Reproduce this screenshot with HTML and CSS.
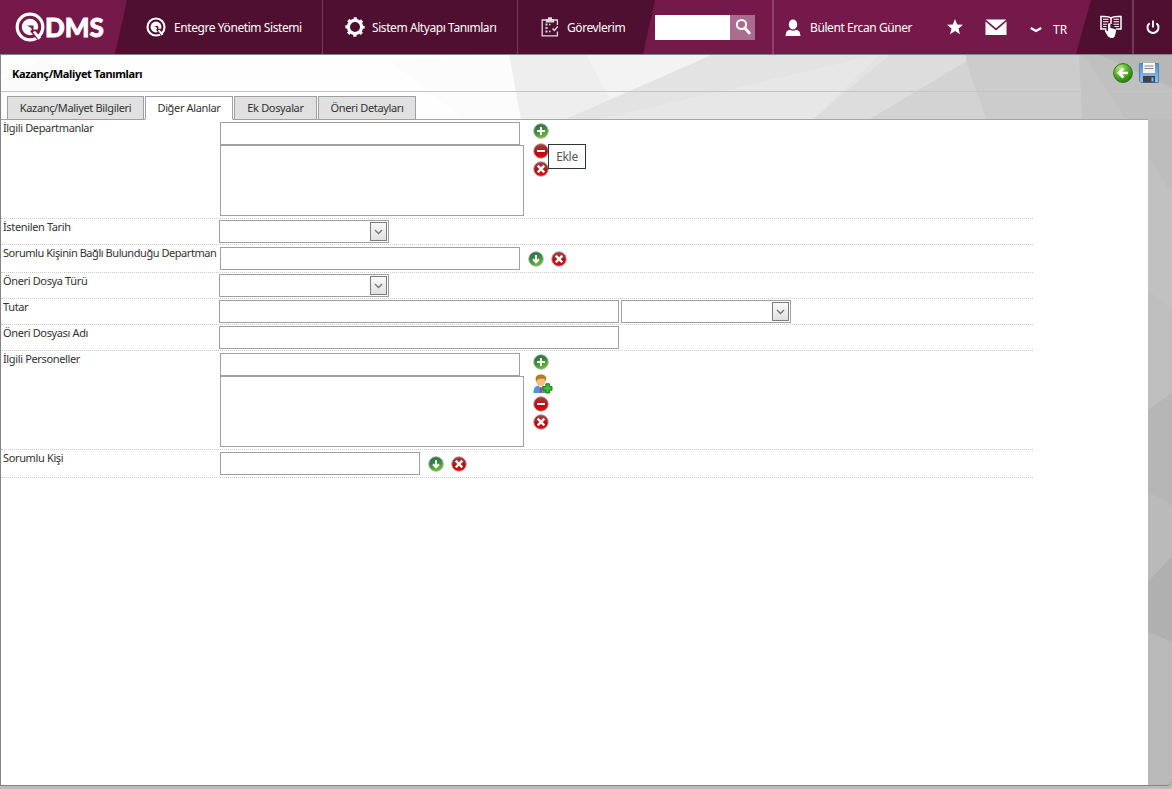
FILE: index.html
```html
<!DOCTYPE html>
<html lang="tr">
  <head>
    <meta charset="UTF-8" />
    <meta name="viewport" content="width=device-width, initial-scale=1.0" />
    <title>QDMS - Kazanç/Maliyet Tanımları</title>
    <link rel="stylesheet" href="styles.css">
  </head>
  <body>
    <!-- shared icons -->
    <svg class="defs" width="0" height="0">
      <defs>
        <linearGradient id="green" x1="0" y1="0" x2="0.4" y2="1">
          <stop offset="0" stop-color="#276b47" />
          <stop offset="0.5" stop-color="#398544" />
          <stop offset="1" stop-color="#6cb830" />
        </linearGradient>
        <linearGradient id="red" x1="0" y1="0" x2="0" y2="1">
          <stop offset="0" stop-color="#a93c42" />
          <stop offset="0.48" stop-color="#b01c22" />
          <stop offset="0.55" stop-color="#c00508" />
          <stop offset="1" stop-color="#e01010" />
        </linearGradient>
        <radialGradient id="lime" cx="0.35" cy="0.25" r="0.8">
          <stop offset="0" stop-color="#b6e67c" />
          <stop offset="0.55" stop-color="#4fac24" />
          <stop offset="1" stop-color="#1f7a0c" />
        </radialGradient>
        <linearGradient id="blue" x1="0" y1="0" x2="0" y2="1">
          <stop offset="0" stop-color="#5b8fc9" />
          <stop offset="1" stop-color="#8cc4f2" />
        </linearGradient>
      </defs>
      <symbol id="i-add" viewBox="0 0 16 16">
        <circle cx="8" cy="8" r="7.3" fill="url(#green)" stroke="#a9b5ac" stroke-width="0.9" />
        <path d="M8 4v8M4 8h8" stroke="#fff" stroke-width="2" />
      </symbol>
      <symbol id="i-remove" viewBox="0 0 16 16">
        <circle cx="8" cy="8" r="7.3" fill="url(#red)" stroke="#b5a6a8" stroke-width="0.9" />
        <path d="M4 8h8" stroke="#fff" stroke-width="2" />
      </symbol>
      <symbol id="i-clear" viewBox="0 0 16 16">
        <circle cx="8" cy="8" r="7.3" fill="url(#red)" stroke="#b5a6a8" stroke-width="0.9" />
        <path d="M4.7 4.7l6.6 6.6M11.3 4.7l-6.6 6.6" stroke="#fff" stroke-width="2.4" />
      </symbol>
      <symbol id="i-pick" viewBox="0 0 16 16">
        <circle cx="8" cy="8" r="7.3" fill="url(#green)" stroke="#a9b5ac" stroke-width="0.9" />
        <path d="M8 4v7M5 8.3l3 3 3-3" fill="none" stroke="#fff" stroke-width="2" />
      </symbol>
      <!-- ring, inner disc, cut-out and tail -->
      <symbol id="i-q" viewBox="0 0 30 30">
        <circle cx="15" cy="15" r="12.8" fill="none" stroke="#fff" stroke-width="3.2" />
        <circle cx="15" cy="15" r="8.2" fill="#fff" />
        <path d="M12 13.5h6.500v4.200l6 7.800-2.500 2-7-8.500c2-.4 2.400-2.500.5-3.500z" fill="currentColor" />
        <path d="M18.500 17.500h5l-2.800 4.500z" fill="currentColor" />
        <path d="M17.800 20.200l2.300-1.200 6 6.500-2.600 2.300z" fill="#fff" />
      </symbol>
    </svg>

    <header class="topbar">
      <a class="logo" href="#">
        <svg width="30" height="30"><use href="#i-q" /></svg>
        <span>DMS</span>
      </a>
      <nav class="menu">
        <a class="menu-item m1" href="#">
          <svg class="q" width="20" height="20"><use href="#i-q" /></svg>
          <span>Entegre Yönetim Sistemi</span>
        </a>
        <a class="menu-item m2" href="#">
          <svg width="20" height="20" viewBox="0 0 20 20">
            <circle cx="10" cy="10" r="6.6" fill="none" stroke="#fff" stroke-width="3.2" />
            <circle cx="10" cy="10" r="8.7" fill="none" stroke="#fff" stroke-width="2" stroke-dasharray="3.3 3.53" stroke-dashoffset="1.6" />
          </svg>
          <span>Sistem Altyapı Tanımları</span>
        </a>
        <a class="menu-item m3" href="#">
          <svg width="18" height="20" viewBox="0 0 18 20" fill="none" stroke="#e5dbe0" stroke-width="1.3">
            <path d="M5 3H1.2v15.8h15.2V14.500M16.400 8V3h-3.700" />
            <path d="M5.500 4.800V2.600H7.700V1h2.600v1.600h2.200v2.200z" fill="#e5dbe0" />
            <path d="M4.500 7.500h2M4.500 11h2M4.500 14.500h2" stroke-width="2" />
            <path d="M8 7.500h1.500M8 14.500h1.500M11.500 11.500l1.800 2 3.500-4" />
          </svg>
          <span>Görevlerim</span>
        </a>
      </nav>
      <form class="search">
        <input type="text" />
        <button type="button">
          <svg width="16" height="18" viewBox="0 0 16 18" fill="none" stroke="#fff">
            <circle cx="6.500" cy="6.500" r="4.600" stroke-width="2" />
            <path d="M9.800 10l4.400 5" stroke-width="2.800" stroke-linecap="round" />
          </svg>
        </button>
      </form>
      <div class="user">
        <svg width="16" height="18" viewBox="0 0 16 18" fill="#fff">
          <ellipse cx="8" cy="5.500" rx="4.200" ry="5" />
          <path d="M.4 17l1-4c.4-1.300 2.500-1.900 3.900-2.200 1.600 1.300 3.800 1.300 5.400 0 1.400.3 3.500.9 3.900 2.200l1 4z" />
        </svg>
        <span>Bülent Ercan Güner</span>
      </div>
      <div class="tools">
        <svg width="16" height="16" viewBox="0 0 16 16" fill="#fff">
          <path d="M8 0l2.200 5.400 5.800.4-4.500 3.700 1.500 5.700-5-3.100-5 3.100 1.500-5.700L0 5.800l5.800-.4z" />
        </svg>
        <svg class="mail" width="22" height="17" viewBox="0 0 22 17" fill="#fff">
          <path d="M.7.500h20.600L11 9.300z" />
          <path d="M.5 2.500L11 11.500l10.500-9V16H.5z" />
        </svg>
        <svg class="caret" width="12" height="6" viewBox="0 0 12 6">
          <path d="M.8 1l5.200 2.900L11.200 1" fill="none" stroke="#fff" stroke-width="2.200" />
        </svg>
        <span class="lang">TR</span>
      </div>
      <div class="corner">
        <a class="manual" href="#">
          <svg width="22" height="24" viewBox="0 0 22 24">
            <path d="M11 3C8.500 1 5 1.200 1 1.500V14h5.500M11 3c2.500-2 6-1.800 10-1.500V14h-5M11 3v6" fill="none" stroke="#fff" stroke-width="1.500" />
            <path d="M3 4.300h5.500M3 6.800h5.500M3 9.300h4M3 11.500h3.500M13.500 4.300H19M13.500 6.800H19M13.500 9.300H19M14.500 11.500H19" stroke="#fff" stroke-width="1.100" />
            <path d="M8 9.500c0-1.600 2.400-1.600 2.400 0V13l4.500.9c1.300.3 1.300 1.500 1 3l-1 3.500c-.5 1.800-1.500 2.600-3.200 2.600-2.500 0-3.300-.9-4.300-2.500L5 16.500c-.6-1.200.6-1.800 1.500-1.200L8 16.500z" fill="#fff" />
          </svg>
        </a>
        <a class="power" href="#">
          <svg width="14" height="15" viewBox="0 0 14 15" fill="none" stroke="#fff" stroke-width="1.900">
            <path d="M3.600 3.200a5.500 5.500 0 1 0 6.800 0M7 .5v7" />
          </svg>
        </a>
      </div>
    </header>

    <main class="page">
      <svg class="backdrop" width="1172" height="735" viewBox="0 54 1172 735">
        <path d="M0 54h1172v735H0z" fill="#fefefe" />
        <path d="M53 54L30 119H0V80z" fill="#fbfbfb" />
        <path d="M388 60L464 119h57L509 54z" fill="#fcfcfc" />
        <path d="M509 54L521 120h651V54z" fill="#eeeeee" />
        <path d="M586 54L610 100 714 54z" fill="#f3f3f3" />
        <path d="M566 119L714 54h250v65z" fill="#e3e3e3" />
        <path d="M600 119L880 54l-66 65z" fill="#e7e7e7" />
        <path d="M813 119L891 54h89v65z" fill="#dddddd" />
        <path d="M870 119l97-58 30 58z" fill="#d3d3d3" />
        <path d="M966 54v7l20 58h186V54z" fill="#cccccc" />
        <path d="M1079 54l3 65h90V54z" fill="#c4c4c4" />
        <path d="M1084 54l42 66h46V54z" fill="#c0c0c0" />
        <path d="M1098 54l74 34V54z" fill="#b7b7b7" />
        <path d="M1126 119h46v670h-46z" fill="#bdbdbd" />
        <path d="M1148 156l24 38v199l-24 17z" fill="#c1c1c1" />
        <path d="M1148 290l24 20v83l-24 17z" fill="#bebebe" />
        <path d="M1148 410l24-17v112l-24-13z" fill="#b6b6b6" />
        <path d="M1148 492l24 13v51l-24 26z" fill="#bababa" />
        <path d="M1148 582l24-26v86l-24-10z" fill="#b0b0b0" />
        <path d="M1148 632l24 10v147h-24z" fill="#b9b9b9" />
        <path d="M0 786h1172v3H0z" fill="#bcbcbc" />
      </svg>

      <section class="panel">
        <div class="title-bar">
          <h1>Kazanç/Maliyet Tanımları</h1>
          <div class="actions">
            <svg width="20" height="20" viewBox="0 0 20 20">
              <circle cx="10" cy="10" r="9.400" fill="url(#lime)" stroke="#2d7418" stroke-width="1" />
              <path d="M15 10H6.500M10.400 5.500L5.800 10l4.600 4.500" fill="none" stroke="#fff" stroke-width="2.600" />
            </svg>
            <svg width="20" height="20" viewBox="0 0 20 20">
              <path d="M.5.500h19v19H2l-1.500-1.500z" fill="url(#blue)" stroke="#5282b8" />
              <path d="M4 0h12v10H4z" fill="#f4f4f4" />
              <path d="M5.500 3h9M5.500 5.500h9" stroke="#8a8a8a" stroke-width="1.200" />
              <path d="M4 13h12v6.500H4z" fill="#3c424a" />
              <path d="M12.500 14.500h2v4h-2z" fill="#84baf0" />
            </svg>
          </div>
        </div>

        <div class="tabs">
          <a class="tab tab1" href="#">Kazanç/Maliyet Bilgileri</a>
          <a class="tab tab2 active" href="#">Diğer Alanlar</a>
          <a class="tab tab3" href="#">Ek Dosyalar</a>
          <a class="tab tab4" href="#">Öneri Detayları</a>
        </div>

        <div class="content">
          <div class="row tall">
            <label>İlgili Departmanlar</label>
            <div class="stack">
              <input class="medium" type="text" />
              <div class="listbox"></div>
            </div>
            <div class="side">
              <svg><use href="#i-add" /></svg>
              <svg class="spaced"><use href="#i-remove" /></svg>
              <svg><use href="#i-clear" /></svg>
              <div class="tooltip">Ekle</div>
            </div>
          </div>
          <div class="row">
            <label>İstenilen Tarih</label>
            <div class="combo"><i><svg width="9" height="6" viewBox="0 0 9 6"><path d="M1 1l3.500 3.500L8 1" /></svg></i></div>
          </div>
          <div class="row pick">
            <label class="long">Sorumlu Kişinin Bağlı Bulunduğu Departman</label>
            <input class="medium" type="text" />
            <div class="inline">
              <svg><use href="#i-pick" /></svg>
              <svg><use href="#i-clear" /></svg>
            </div>
          </div>
          <div class="row">
            <label>Öneri Dosya Türü</label>
            <div class="combo"><i><svg width="9" height="6" viewBox="0 0 9 6"><path d="M1 1l3.500 3.500L8 1" /></svg></i></div>
          </div>
          <div class="row">
            <label>Tutar</label>
            <input class="wide" type="text" />
            <div class="combo"><i><svg width="9" height="6" viewBox="0 0 9 6"><path d="M1 1l3.500 3.500L8 1" /></svg></i></div>
          </div>
          <div class="row">
            <label>Öneri Dosyası Adı</label>
            <input class="wide" type="text" />
          </div>
          <div class="row tall">
            <label>İlgili Personeller</label>
            <div class="stack">
              <input class="medium" type="text" />
              <div class="listbox"></div>
            </div>
            <div class="side">
              <svg><use href="#i-add" /></svg>
              <svg class="person" viewBox="0 0 20 20">
                <path d="M.5 19c-.3-4 1-6.500 4.500-7.500h5c3.500 1 4.500 3.500 4.200 7.500z" fill="#4a94e0" />
                <path d="M5.500 11.500l2.300 3 2-3z" fill="#fff" />
                <path d="M7.200 13h1.200l.6 4.500-1.200 1.500-1.200-1.500z" fill="#d33a3a" />
                <ellipse cx="7.800" cy="6.800" rx="4.600" ry="5" fill="#f3bf80" />
                <path d="M3.100 8C1.500 2.500 4 .5 8 .5s6.300 2.300 4.700 7c-.4-2.400-1.700-3.200-4.200-3-2.700.1-4.300.6-5.400 3.500z" fill="#b87a1d" />
                <path d="M12.800 9.800h3.600v2.800H19v3.600h-2.600V19h-3.600v-2.800H10v-3.600h2.800z" fill="#3fc02b" stroke="#187b16" />
              </svg>
              <svg class="spaced"><use href="#i-remove" /></svg>
              <svg><use href="#i-clear" /></svg>
            </div>
          </div>
          <div class="row pick">
            <label>Sorumlu Kişi</label>
            <input class="narrow" type="text" />
            <div class="inline">
              <svg><use href="#i-pick" /></svg>
              <svg><use href="#i-clear" /></svg>
            </div>
          </div>
        </div>
      </section>
    </main>
  </body>
</html>
```
FILE: styles.css
```css
* {
  box-sizing: border-box;
}
html,
body {
  margin: 0;
  height: 100%;
  overflow: hidden;
}
body {
  width: 1172px;
  font-family: "Noto Sans", "Open Sans", sans-serif;
  font-size: 11px;
  color: #333;
}
a {
  color: inherit;
  text-decoration: none;
}
svg {
  display: block;
  flex: none;
}
.defs {
  position: absolute;
}

/* top bar */
.topbar {
  display: flex;
  height: 54px;
  background: #75194a;
  color: #fff;
  font-size: 12px;
  letter-spacing: -0.42px;
  white-space: nowrap;
}
.logo {
  display: flex;
  align-items: center;
  width: 115px;
  padding-left: 15px;
  font-family: Lato, sans-serif;
  font-size: 26px;
  font-weight: 900;
}
.logo svg {
  color: #75194a;
}
.logo span {
  letter-spacing: 0;
  -webkit-text-stroke: 0.8px #fff;
}
.menu {
  display: flex;
  width: 540px;
  background: #4f0f31;
  clip-path: polygon(12px 0, 100% 0, 528px 100%, 0 100%);
}
.menu-item {
  display: flex;
  align-items: center;
  border-right: 1px solid #6f3c57;
}
.menu-item span {
  padding-top: 1px;
}
.q {
  color: #4f0f31;
}
.m1 {
  width: 208px;
  padding-left: 31px;
  gap: 8px;
}
.m2 {
  width: 195px;
  padding-left: 22px;
  gap: 7px;
}
.m3 {
  border: 0;
  padding-left: 23px;
  gap: 8px;
}
.search {
  display: flex;
  align-items: center;
  width: 119px;
  border-right: 2px solid #903f69;
}
.search input {
  width: 75px;
  height: 25px;
  padding: 0;
  border: 0;
  background: #fff;
}
.search button {
  display: flex;
  width: 25px;
  height: 25px;
  padding: 3px 0 0 5px;
  border: 0;
  background: #aa6d8d;
}
.user {
  display: flex;
  align-items: center;
  width: 173px;
  padding: 1px 0 0 11px;
  gap: 9px;
}
.tools {
  display: flex;
  align-items: center;
  width: 129px;
}
.mail {
  margin-left: 22px;
}
.caret {
  margin: 6px 0 0 23px;
}
.lang {
  margin: 4px 0 0 11px;
  letter-spacing: 0;
}
.corner {
  display: flex;
  width: 96px;
  background: #4f0f31;
  clip-path: polygon(15px 0, 100% 0, 100% 100%, 0 100%);
}
.manual {
  width: 58px;
  padding: 15px 0 0 24px;
  border-right: 2px solid #703b58;
}
.power {
  padding: 20px 0 0 12px;
}

/* page */
.page {
  position: relative;
  height: 735px;
}
.backdrop {
  position: absolute;
  top: 0;
  left: 0;
}
.panel {
  position: relative;
  display: flex;
  flex-direction: column;
  height: 732px;
  border: 1px solid #858585;
  border-right: 0;
  border-bottom-right-radius: 5px;
}
.title-bar {
  display: flex;
  justify-content: space-between;
  height: 37px;
  padding: 8px 13px 0 11px;
  border-bottom: 1px solid #c4c4c4;
}
.title-bar h1 {
  margin: 3px 0 0;
  color: #000;
  font-size: 11px;
  line-height: 16px;
  letter-spacing: -0.35px;
}
.actions {
  display: flex;
  gap: 6px;
}
.tabs {
  display: flex;
  height: 28px;
  width: 1147px;
  padding: 4px 0 0 6px;
  gap: 1px;
  box-shadow: inset 0 -1px #a5a5a5;
}
.tab {
  height: 24px;
  border: 1px solid #a0a0a0;
  background: #e0e0e0;
  text-align: center;
  line-height: 22px;
  letter-spacing: -0.35px;
  white-space: nowrap;
}
.tab.active {
  border-bottom-color: #fff;
  background: #fff;
}
.tab1 {
  width: 137px;
}
.tab2 {
  width: 88px;
}
.tab3 {
  width: 83px;
}
.tab4 {
  width: 98px;
}
.content {
  flex: 1;
  width: 1147px;
  background: #fff;
}

/* form rows */
.row {
  display: flex;
  width: 1032px;
  height: 26px;
  padding-top: 1px;
  border-bottom: 1px dotted #ccc;
}
.row label {
  width: 218px;
  margin-top: -1px;
  padding-left: 2px;
  line-height: 15px;
  letter-spacing: -0.36px;
  white-space: nowrap;
}
.row .long {
  letter-spacing: -0.45px;
}
.row input,
.listbox,
.combo {
  height: 23px;
  border: 1px solid #a0a0a0;
  background: #fff;
}
.row input {
  padding: 0 3px;
}
.row .wide {
  width: 400px;
}
.row .medium {
  width: 300px;
}
.row .narrow {
  width: 200px;
}
.wide + .combo {
  margin-left: 2px;
}
.combo {
  width: 170px;
  padding: 1px;
}
.combo i {
  display: flex;
  align-items: center;
  justify-content: center;
  width: 17px;
  height: 19px;
  margin-left: auto;
  border: 1px solid #7c7c7c;
  background: linear-gradient(#fafafa, #e0e0e0);
}
.combo path {
  fill: none;
  stroke: #777;
  stroke-width: 1.4;
}
.tall {
  height: 99px;
}
.pick {
  height: 28px;
}
.tall,
.pick {
  padding-top: 2px;
}
.tall label,
.pick label {
  width: 219px;
  margin-top: -2px;
}
.stack {
  width: 304px;
}
.stack input {
  display: block;
}
.listbox {
  height: 71px;
}
.side {
  position: relative;
  display: flex;
  flex-direction: column;
  gap: 2px;
  padding: 1px 0 0 9px;
}
.side svg,
.inline svg {
  width: 16px;
  height: 16px;
}
.side .spaced {
  margin-top: 2px;
}
.side .person {
  width: 20px;
  height: 20px;
  margin-top: 2px;
}
.person + .spaced {
  margin-top: 0;
}
.inline {
  display: flex;
  gap: 7px;
  padding: 4px 0 0 8px;
}
.tooltip {
  position: absolute;
  top: 22px;
  left: 24px;
  width: 38px;
  height: 25px;
  border: 1px solid #333;
  background: #fff;
  color: #555;
  font-size: 12px;
  line-height: 24px;
  letter-spacing: -0.3px;
  text-align: center;
}
```
